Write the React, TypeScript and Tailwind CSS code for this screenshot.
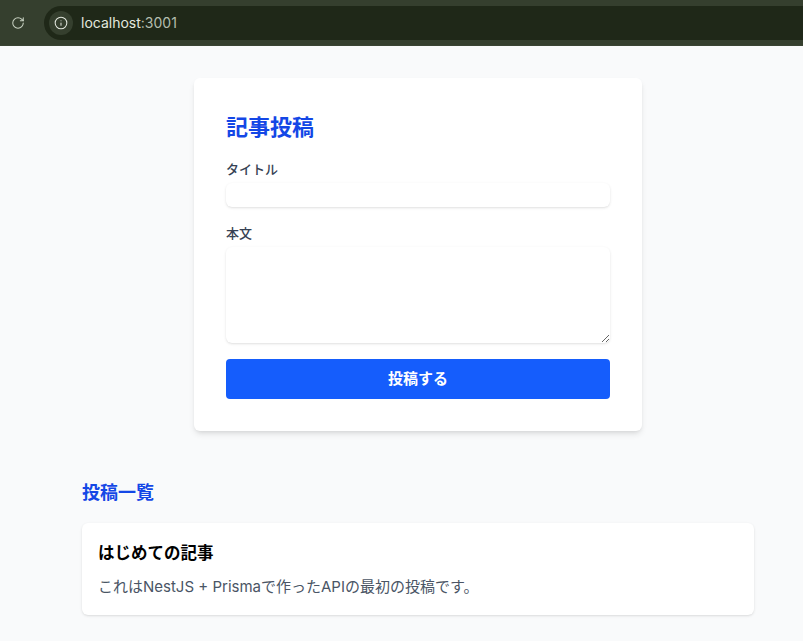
import { RotateCw, Info } from "lucide-react";

const font = "font-['Inter','Noto_Sans_CJK_JP',sans-serif]";

const AddressBar = () => {
  return (
    <header className="flex h-[46px] items-center bg-[#353f2e] border-b border-[#3a4433]">
      <div className="flex w-[36px] justify-center">
        <RotateCw className="h-[14px] w-[14px] text-[#c9d3c3]" strokeWidth={1.75} />
      </div>
      <div className="ml-[8px] flex h-[34px] flex-1 items-center rounded-l-full bg-[#1f2818] pl-[5px]">
        <div className="flex h-[24px] w-[24px] items-center justify-center rounded-full bg-[#353f2e]">
          <Info className="h-[14px] w-[14px] text-[#e3e8df]" strokeWidth={1.75} />
        </div>
        <span className="ml-[8px] text-[14px] text-[#e3e8df]">
          localhost<span className="text-[#b4bdae]">:3001</span>
        </span>
      </div>
    </header>
  );
};

const PostForm = () => {
  return (
    <form className="mx-auto w-[448px] rounded-md bg-white p-8 shadow-md">
      <h1 className="mb-4 pt-[1px] text-[22px] leading-8 font-bold text-blue-700">記事投稿</h1>
      <div className="mb-4">
        <label className="mb-1 block text-[13px] leading-5 font-medium text-gray-700">タイトル</label>
        <input type="text" className="block h-[24px] w-full rounded-md bg-white shadow-sm outline-none" />
      </div>
      <div className="mb-4">
        <label className="mb-1 block text-[13px] leading-5 font-medium text-gray-700">本文</label>
        <textarea rows={4} className="block h-[96px] w-full rounded-md bg-white shadow-sm outline-none" />
      </div>
      <button type="button" className="h-[40px] w-full rounded bg-blue-600 text-[15px] font-semibold text-white">
        投稿する
      </button>
    </form>
  );
};

const PostList = () => {
  return (
    <section className="mx-auto mt-[48px] w-[672px]">
      <h2 className="mb-4 text-[18px] leading-7 font-bold text-blue-700">投稿一覧</h2>
      <article className="rounded-md bg-white p-4 shadow">
        <h3 className="mb-2 text-[16.5px] leading-7 font-semibold text-black">はじめての記事</h3>
        <p className="text-[15px] leading-6 text-gray-600">これはNestJS + Prismaで作ったAPIの最初の投稿です。</p>
      </article>
    </section>
  );
};

export default function App() {
  return (
    <div className={`${font} h-[641px] overflow-hidden bg-gray-50`}>
      <AddressBar />
      <main className="w-[836px] pt-8">
        <PostForm />
        <PostList />
      </main>
    </div>
  );
}
